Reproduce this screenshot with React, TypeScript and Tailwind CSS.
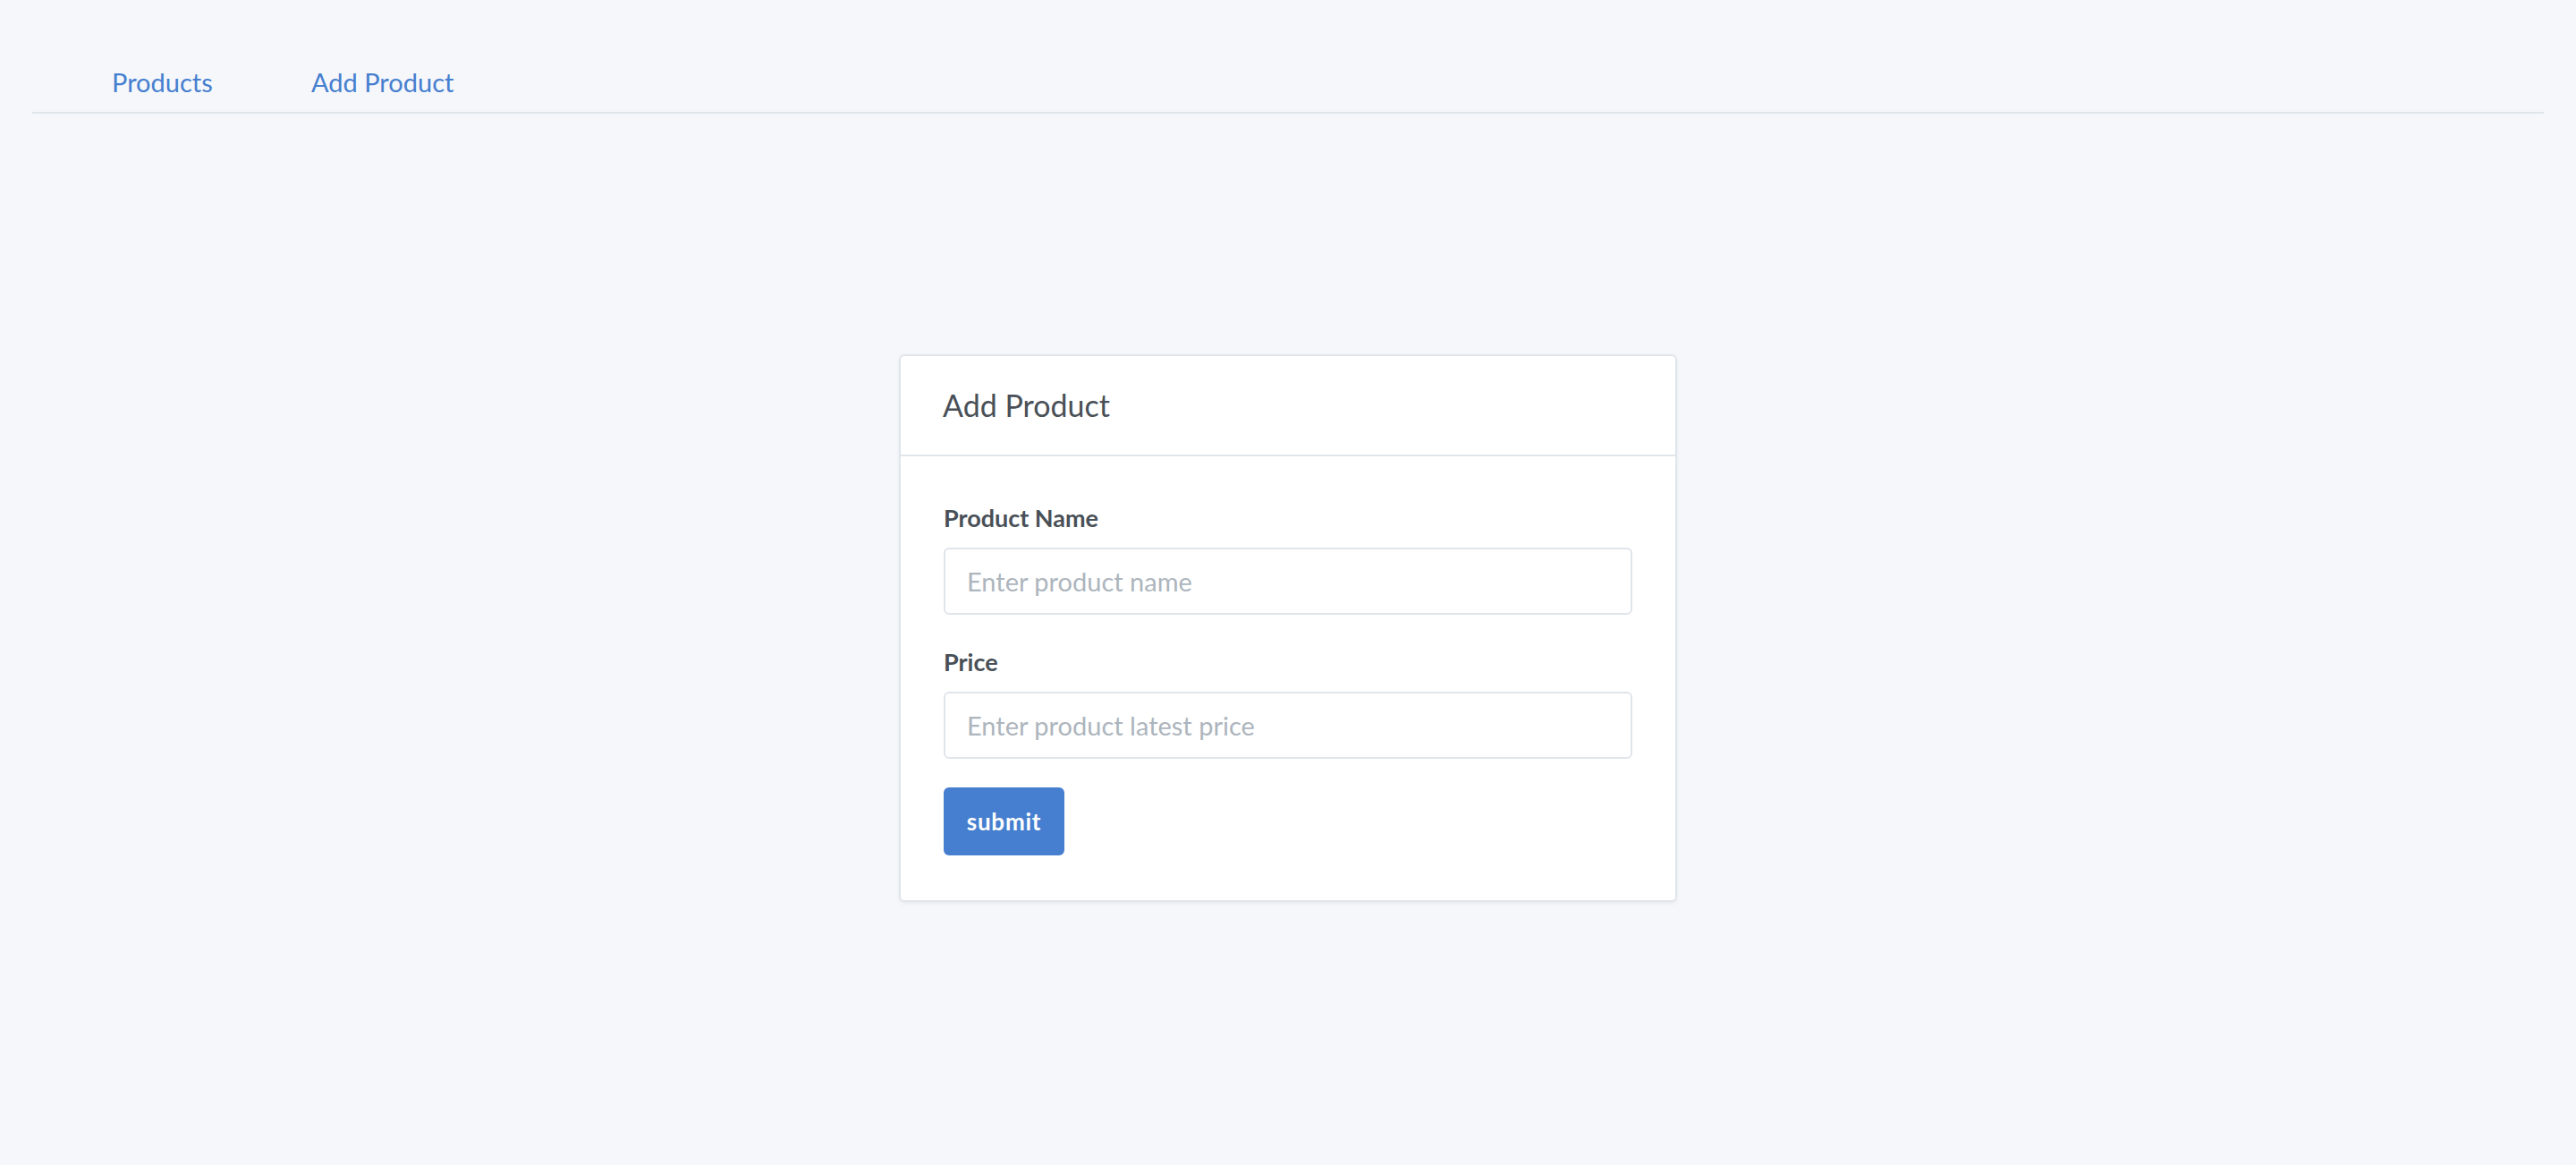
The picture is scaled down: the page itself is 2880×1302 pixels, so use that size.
const font = { fontFamily: 'Lato, "Noto Sans", sans-serif' };

const NavBar = () => {
  return (
    <nav className="mx-9 flex border-b-2 border-[#e0e5ec] pt-[71px]">
      <a href="#" className="ml-[89px] block w-[223px] pb-[12px] text-[29px] leading-[42px] text-[#467fcf]">
        Products
      </a>
      <a href="#" className="block pb-[12px] text-[29px] leading-[42px] text-[#467fcf]">
        Add Product
      </a>
    </nav>
  );
};

const FormField = ({ label, placeholder }: { label: string; placeholder: string }) => {
  return (
    <label className="mb-8 block">
      <span className="mb-3 block text-[27px] font-bold leading-[42px] text-[#495057]">{label}</span>
      <input
        type="text"
        placeholder={placeholder}
        className="block h-[75px] w-full rounded-[6px] border-2 border-[#e0e5ec] bg-white px-6 text-[29px] text-[#495057] outline-none placeholder:text-[#adb5bd]"
      />
    </label>
  );
};

export default function App() {
  return (
    <div className="min-h-screen bg-[#f5f7fb]" style={font}>
      <NavBar />
      <div className="mt-[269px] flex justify-center">
        <form
          className="w-[870px] rounded-[6px] border-2 border-[#e0e5ec] bg-white shadow-[0_2px_4px_0_rgba(0,0,0,0.05)]"
          onSubmit={(event) => event.preventDefault()}
        >
          <div className="flex h-[112px] items-center border-b-2 border-[#e0e5ec] px-[47px]">
            <h3 className="text-[34px] font-normal leading-[1.2] text-[#495057]">Add Product</h3>
          </div>
          <div className="px-12 pt-12 pb-[50px]">
            <FormField label="Product Name" placeholder="Enter product name" />
            <FormField label="Price" placeholder="Enter product latest price" />
            <button
              type="submit"
              className="mt-[2px] flex h-[76px] w-[135px] items-center justify-center rounded-[6px] bg-[#467fcf] text-[26px] font-bold tracking-[0.03em] text-white"
            >
              submit
            </button>
          </div>
        </form>
      </div>
    </div>
  );
}
